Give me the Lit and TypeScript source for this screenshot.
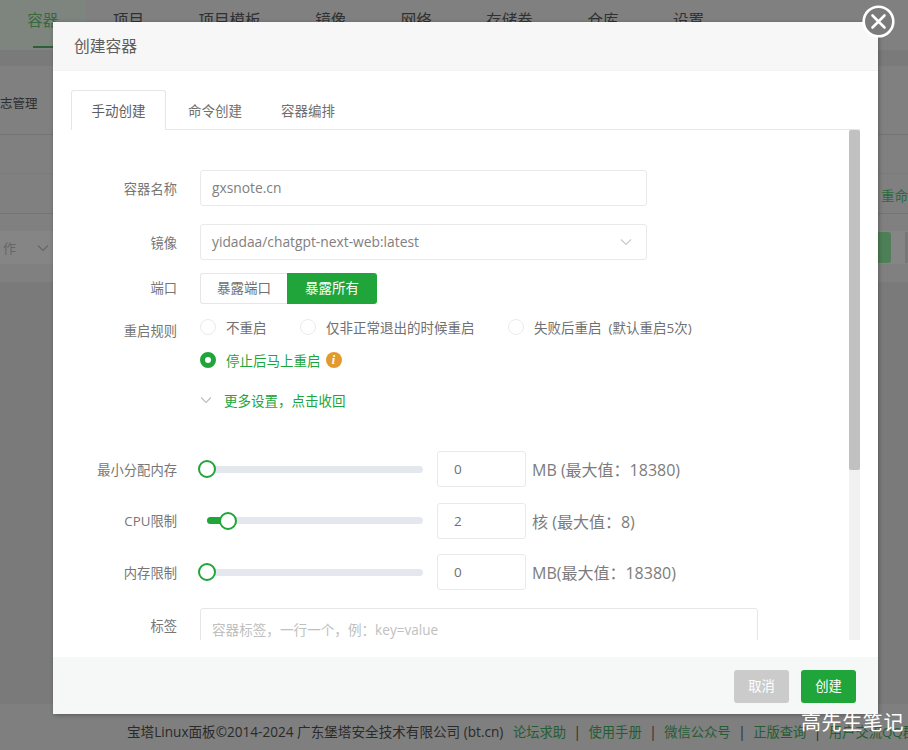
import { LitElement, css, html } from "lit";
import { customElement } from "lit/decorators.js";

const NAV = ["容器", "项目", "项目模板", "镜像", "网络", "存储卷", "仓库", "设置"];
const LINKS = ["论坛求助", "使用手册", "微信公众号", "正版查询", "用户交流QQ群"];
const SLIDERS = [
  { label: "最小分配内存", value: "0", pct: 0, unit: "MB (最大值：18380)" },
  { label: "CPU限制", value: "2", pct: 3.4, unit: "核 (最大值：8)" },
  { label: "内存限制", value: "0", pct: 0, unit: "MB(最大值：18380)" },
];

@customElement("app-root")
export class AppRoot extends LitElement {
  static styles = css`
    :host {
      display: block;
      position: relative;
      width: 908px;
      height: 750px;
      overflow: hidden;
      background: #7a7a7a;
      font-family: "Open Sans", "Noto Sans CJK SC", sans-serif;
      color: #707070;
    }

    /* page behind the dialog, already painted in its dimmed colours */
    .page {
      height: 750px;
      display: flex;
      flex-direction: column;
      background: #7a7a7a;
    }

    .nav {
      height: 50px;
      flex: none;
      display: flex;
      background: #808080;
      font-size: 15.5px;
      color: #303030;
    }

    .nav span {
      padding: 0 27.3px;
      line-height: 40px;
      white-space: nowrap;
    }

    .nav span:first-child {
      color: #38693f;
      background: #7d857e;
    }

    .nav span:first-child::after {
      content: "";
      display: block;
      width: 20px;
      height: 2px;
      margin: 6px auto 0;
      background: #2f5f3a;
    }

    .rows {
      margin-top: 16px;
      height: 216px;
      flex: none;
      display: flex;
      flex-direction: column;
      background: #808080;
    }

    .strip {
      flex: none;
      border-bottom: 1px solid #747474;
    }

    .logs {
      height: 69px;
      box-sizing: border-box;
      padding-top: 27px;
      font-size: 12.5px;
      color: #2e2e2e;
    }

    .blank {
      height: 38px;
      border-bottom-color: #7b7b7b;
    }

    .rename {
      height: 40px;
      box-sizing: border-box;
      padding-top: 11px;
      font-size: 13.5px;
      color: #2c6a3a;
      text-align: right;
      white-space: nowrap;
    }

    .batch {
      flex: 1;
      border: none;
      padding-top: 17px;
    }

    .batch-line {
      height: 33px;
      display: flex;
      align-items: center;
      background: #858585;
      font-size: 13px;
      color: #666;
    }

    .batch-line span {
      margin-left: 3px;
      margin-right: 21px;
    }

    .batch-line svg {
      margin-top: 1px;
    }

    .green-end {
      width: 13px;
      height: 31px;
      background: #4e8058;
      border-radius: 0 3px 3px 0;
      margin-left: auto;
      margin-right: 14px;
    }

    .gray-end {
      width: 3px;
      height: 31px;
      background: #777;
    }

    .footer {
      margin-top: auto;
      height: 46px;
      box-sizing: border-box;
      padding: 19px 0 0 127px;
      background: #7f7f7f;
      font-size: 13.6px;
      line-height: 18px;
      white-space: nowrap;
      color: #2a2a2a;
    }

    .footer a {
      color: #245c33;
      font-size: 13.3px;
    }

    .footer a:first-of-type {
      margin-left: 6px;
    }

    .footer i {
      font-style: normal;
      margin: 0 7.5px;
    }

    /* dialog */
    .dialog {
      position: absolute;
      left: 53px;
      top: 22px;
      width: 825px;
      height: 692px;
      display: flex;
      flex-direction: column;
      background: #fff;
      border-radius: 2px;
      box-shadow: 1px 1px 4px rgba(0, 0, 0, 0.3);
    }

    .close {
      position: absolute;
      left: 809px;
      top: -17px;
      width: 33px;
      height: 33px;
    }

    .head {
      height: 49px;
      flex: none;
      box-sizing: border-box;
      padding-left: 21px;
      background: #f7f7f7;
      border-bottom: 1px solid #f3f3f3;
      font-size: 15.75px;
      line-height: 48px;
      color: #5e5e5e;
    }

    .body {
      flex: 1;
      min-height: 0;
      display: flex;
      flex-direction: column;
      padding: 19px 18px 17px;
    }

    .tabs {
      height: 39px;
      flex: none;
      display: flex;
      border-bottom: 1px solid #e6e6e6;
      font-size: 13.5px;
      color: #707070;
    }

    .tab {
      height: 39px;
      line-height: 43px;
      box-sizing: border-box;
      text-align: center;
      white-space: nowrap;
    }

    .tab.active {
      width: 95px;
      background: #fff;
      color: #5e5e5e;
      border: 1px solid #e6e6e6;
      border-bottom: none;
      border-radius: 3px 3px 0 0;
      height: 40px;
      line-height: 41px;
    }

    .tab.two {
      width: 98px;
    }

    .tab.three {
      width: 88px;
    }

    .scroll {
      flex: 1;
      min-height: 0;
      display: flex;
      overflow: hidden;
    }

    .form {
      flex: 1;
      min-width: 0;
      overflow: hidden;
      padding-top: 40px;
      display: flex;
      flex-direction: column;
    }

    .bar {
      width: 11px;
      flex: none;
      background: #f1f1f1;
    }

    .thumb {
      height: 340px;
      background: #c1c1c1;
      border-radius: 2px;
    }

    .row {
      display: flex;
      flex: none;
    }

    .label {
      width: 106px;
      flex: none;
      margin-right: 23px;
      text-align: right;
      font-size: 13.3px;
      color: #767676;
      white-space: nowrap;
    }

    .input {
      box-sizing: border-box;
      height: 36px;
      width: 447px;
      border: 1px solid #e9e9e9;
      border-radius: 3px;
      padding-left: 11px;
      line-height: 34px;
      font-size: 13.8px;
      color: #808080;
      display: flex;
      align-items: center;
      justify-content: space-between;
    }

    .input svg {
      margin-right: 14px;
    }

    .name {
      align-items: center;
      height: 36px;
    }

    .image {
      align-items: center;
      height: 36px;
      margin-top: 18px;
    }

    .port {
      margin-top: 13px;
      align-items: center;
      height: 31px;
    }

    .port .label {
      padding-bottom: 3px;
    }

    .seg {
      display: flex;
      height: 31px;
      font-size: 13.5px;
      line-height: 31px;
      text-align: center;
    }

    .seg span {
      box-sizing: border-box;
      width: 87px;
      border: 1px solid #e6e6e6;
      border-right: none;
      border-radius: 3px 0 0 3px;
      line-height: 29px;
    }

    .seg b {
      font-weight: 400;
      width: 90px;
      background: #20a53a;
      color: #fff;
      border-radius: 0 3px 3px 0;
    }

    .restart {
      margin-top: 14px;
    }

    .restart .label {
      line-height: 22px;
      padding-top: 2px;
    }

    .radios {
      display: flex;
      flex-direction: column;
      gap: 15px;
      font-size: 13.5px;
    }

    .radio-line {
      display: flex;
      height: 18px;
      align-items: center;
    }

    .radio {
      display: flex;
      align-items: center;
      white-space: nowrap;
    }

    .dot {
      width: 16px;
      height: 16px;
      box-sizing: border-box;
      border: 1px solid #ebebeb;
      border-radius: 50%;
      margin-right: 10px;
      flex: none;
    }

    .dot.on {
      border: 5.5px solid #20a53a;
      background: #fff;
    }

    .on-text {
      color: #20a53a;
    }

    .info {
      width: 16px;
      height: 16px;
      border-radius: 50%;
      background: #e39a2d;
      color: #fff;
      margin-left: 5px;
      font: italic 700 12px/16px "Liberation Serif", serif;
      text-align: center;
    }

    .more {
      margin: 21px 0 0 129px;
      height: 20px;
      display: flex;
      align-items: center;
      gap: 12px;
      font-size: 13.5px;
      color: #20a53a;
      flex: none;
    }

    .limit {
      align-items: center;
      height: 36px;
      margin-top: 15.5px;
    }

    .limit.first {
      margin-top: 41px;
    }

    .track-wrap {
      width: 223px;
      flex: none;
      display: flex;
      align-items: center;
      position: relative;
      height: 16px;
      margin-right: 14px;
    }

    .track {
      margin-left: 7px;
      flex: 1;
      height: 7px;
      border-radius: 4px;
      background: #e4e7ed;
      overflow: hidden;
    }

    .fill {
      height: 100%;
      background: #20a53a;
    }

    .knob {
      position: absolute;
      top: -1px;
      width: 18px;
      height: 18px;
      box-sizing: border-box;
      background: #fff;
      border: 2px solid #20a53a;
      border-radius: 50%;
    }

    .num {
      box-sizing: border-box;
      width: 89px;
      height: 36px;
      flex: none;
      border: 1px solid #e9e9e9;
      border-radius: 3px;
      padding-left: 16px;
      line-height: 34px;
      font-size: 13.5px;
      color: #707070;
    }

    .unit {
      margin-left: 6px;
      font-size: 16px;
      color: #7c7c7c;
      white-space: nowrap;
    }

    .tags {
      margin-top: 18px;
      align-items: flex-start;
    }

    .tags .label {
      padding-top: 8px;
    }

    .area {
      width: 558px;
      height: 80px;
      box-sizing: border-box;
      border: 1px solid #e6e6e6;
      border-radius: 3px;
      padding: 12px 11px;
      font-size: 13.6px;
      line-height: 18px;
      color: #c0c0c0;
      white-space: nowrap;
    }

    .foot {
      height: 57px;
      flex: none;
      box-sizing: border-box;
      padding: 13px 22px 0 0;
      display: flex;
      justify-content: flex-end;
      gap: 12px;
      background: #f6f8f8;
    }

    .btn {
      width: 55px;
      height: 33px;
      border-radius: 3px;
      background: #20a53a;
      color: #fff;
      font-size: 13.3px;
      line-height: 33px;
      text-align: center;
    }

    .btn.off {
      background: #cbcbcb;
    }

    .mark {
      position: absolute;
      left: 801px;
      top: 710px;
      font-size: 20px;
      line-height: 26px;
      letter-spacing: 0.6px;
      color: #fff;
      white-space: nowrap;
    }
  `;

  private chevron(color: string) {
    return html`<svg width="12" height="8" viewBox="0 0 12 8" fill="none">
      <path d="M1 1.5 6 6.5 11 1.5" stroke=${color} stroke-width="1.1" />
    </svg>`;
  }

  protected override render() {
    return html`
      <div class="page">
        <div class="nav">${NAV.map((n) => html`<span>${n}</span>`)}</div>
        <div class="rows">
          <div class="strip logs">志管理</div>
          <div class="strip blank"></div>
          <div class="strip rename">重命</div>
          <div class="strip batch">
            <div class="batch-line">
              <span>作</span>${this.chevron("#666")}
              <div class="green-end"></div>
              <div class="gray-end"></div>
            </div>
          </div>
        </div>
        <div class="footer">
          宝塔Linux面板©2014-2024 广东堡塔安全技术有限公司 (bt.cn)
          ${LINKS.map((l, i) => html`${i ? html`<i>|</i>` : ""}<a>${l}</a>`)}
        </div>
      </div>
      <div class="dialog">
        <svg class="close" viewBox="0 0 33 33">
          <circle cx="16.5" cy="16.5" r="14.8" fill="#7b7b7b" stroke="#fff" stroke-width="2.6" />
          <path d="M10.5 10.5 22.5 22.5M22.5 10.5 10.5 22.5" stroke="#fff" stroke-width="2.6" stroke-linecap="round" />
        </svg>
        <div class="head">创建容器</div>
        <div class="body">
          <div class="tabs">
            <div class="tab active">手动创建</div>
            <div class="tab two">命令创建</div>
            <div class="tab three">容器编排</div>
          </div>
          <div class="scroll">
            <div class="form">
              <div class="row name">
                <div class="label">容器名称</div>
                <div class="input">gxsnote.cn</div>
              </div>
              <div class="row image">
                <div class="label">镜像</div>
                <div class="input">
                  yidadaa/chatgpt-next-web:latest ${this.chevron("#c8c8c8")}
                </div>
              </div>
              <div class="row port">
                <div class="label">端口</div>
                <div class="seg"><span>暴露端口</span><b>暴露所有</b></div>
              </div>
              <div class="row restart">
                <div class="label">重启规则</div>
                <div class="radios">
                  <div class="radio-line">
                    <div class="radio" style="width:100px"><div class="dot"></div>不重启</div>
                    <div class="radio" style="width:208px"><div class="dot"></div>仅非正常退出的时候重启</div>
                    <div class="radio"><div class="dot"></div>失败后重启&nbsp;&nbsp;(默认重启5次)</div>
                  </div>
                  <div class="radio-line">
                    <div class="radio on-text"><div class="dot on"></div>停止后马上重启</div>
                    <div class="info">i</div>
                  </div>
                </div>
              </div>
              <div class="more">${this.chevron("#bbb")}更多设置，点击收回</div>
              ${SLIDERS.map(
                (s, i) => html`
                  <div class="row limit ${i === 0 ? "first" : ""}">
                    <div class="label">${s.label}</div>
                    <div class="track-wrap">
                      <div class="track"><div class="fill" style="width:${s.pct * 2}%"></div></div>
                      <div class="knob" style="left:${s.pct ? 19 : -2}px"></div>
                    </div>
                    <div class="num">${s.value}</div>
                    <div class="unit">${s.unit}</div>
                  </div>
                `,
              )}
              <div class="row tags">
                <div class="label">标签</div>
                <div class="area">容器标签，一行一个，例：key=value</div>
              </div>
            </div>
            <div class="bar"><div class="thumb"></div></div>
          </div>
        </div>
        <div class="foot">
          <div class="btn off">取消</div>
          <div class="btn">创建</div>
        </div>
      </div>
      <div class="mark">高先生笔记</div>
    `;
  }
}
